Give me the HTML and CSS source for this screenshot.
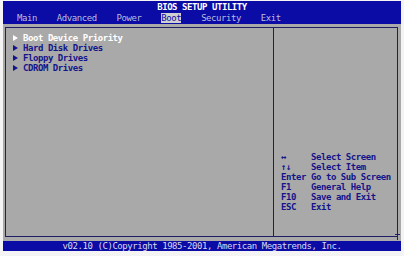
FILE: index.html
```html
<!DOCTYPE html>
<html lang="en">
<head>
    <meta charset="UTF-8">
    <meta name="viewport" content="width=device-width, initial-scale=1.0">
    <title>BIOS Setup Utility</title>
    <link rel="stylesheet" href="styles.css">
</head>
<body>
    <div class="screen">
        <!-- Cabecera con titulo y menu -->
        <div class="bios-header">
            <div class="bios-title">BIOS SETUP UTILITY</div>
            <div class="bios-menu">
                <span class="menu-item">Main</span>
                <span class="menu-item">Advanced</span>
                <span class="menu-item">Power</span>
                <span class="menu-item active">Boot</span>
                <span class="menu-item">Security</span>
                <span class="menu-item">Exit</span>
            </div>
        </div>

        <div class="bios-frame">
            <div class="panel-left">
                <div class="boot-item selected"><span class="arrow"></span>Boot Device Priority</div>
                <div class="boot-item"><span class="arrow"></span>Hard Disk Drives</div>
                <div class="boot-item"><span class="arrow"></span>Floppy Drives</div>
                <div class="boot-item"><span class="arrow"></span>CDROM Drives</div>
            </div>
            <div class="panel-right">
                <div class="help-row"><span class="help-key">&harr;</span>Select Screen</div>
                <div class="help-row"><span class="help-key">&uarr;&darr;</span>Select Item</div>
                <div class="help-row"><span class="help-key">Enter</span>Go to Sub Screen</div>
                <div class="help-row"><span class="help-key">F1</span>General Help</div>
                <div class="help-row"><span class="help-key">F10</span>Save and Exit</div>
                <div class="help-row"><span class="help-key">ESC</span>Exit</div>
                <span class="scroll-mark"></span>
            </div>
        </div>

        <div class="bios-footer">v02.10 (C)Copyright 1985-2001, American Megatrends, Inc.</div>
    </div>
</body>
</html>
```

FILE: styles.css
```css
body {
    margin: 0;
    background-color: #f4f4f4;
}

.screen {
    margin: 1px 0 0 3px;
    width: 398px;
    height: 250px;
    display: flex;
    flex-direction: column;
    background-color: #a9a9a9;
    font-family: "DejaVu Sans Mono", "Liberation Mono", monospace;
    font-size: 9px;
    font-weight: bold;
    letter-spacing: -0.44px;
    line-height: 10px;
    white-space: nowrap;
}

.bios-header {
    background-color: #0b0ba6;
    height: 23px;
    padding-top: 1px;
    box-sizing: border-box;
}

.bios-title {
    color: #ffffff;
    text-align: center;
}

.bios-menu {
    display: flex;
    gap: 19.9px;
    padding-left: 14px;
    margin-top: 1px;
}

.menu-item {
    color: #bcbcde;
    font-weight: normal;
}

.menu-item.active {
    background-color: #d0d0d0;
    color: #0b0ba6;
}

.bios-frame {
    position: relative;
    flex: 1;
    display: flex;
    margin: 3px 3px 4px 2px;
    border: 1px solid #1e1e62;
}

.panel-left {
    width: 268px;
    box-sizing: border-box;
    padding: 5px 0 0 7px;
    border-right: 1px solid #1e1e62;
}

.boot-item {
    display: flex;
    align-items: center;
    color: #14148a;
}

.boot-item.selected {
    color: #ffffff;
}

.arrow {
    width: 0;
    height: 0;
    border-left: 5px solid currentColor;
    border-top: 3px solid transparent;
    border-bottom: 3px solid transparent;
    margin-right: 5px;
}

.panel-right {
    flex: 1;
    display: flex;
    flex-direction: column;
    justify-content: flex-end;
    padding: 0 0 24px 7px;
}

.help-row {
    display: flex;
    color: #14148a;
}

.help-key {
    width: 30px;
}

.scroll-mark {
    position: absolute;
    right: -1px;
    bottom: -4px;
    width: 1px;
    height: 9px;
    background-color: #1e1e62;
}

.scroll-mark::after {
    content: "";
    position: absolute;
    left: -2px;
    top: 3px;
    width: 5px;
    height: 1px;
    background-color: #1e1e62;
}

.bios-footer {
    height: 10px;
    background-color: #0b0ba6;
    color: #d8d8f0;
    font-weight: normal;
    text-align: center;
}
```
